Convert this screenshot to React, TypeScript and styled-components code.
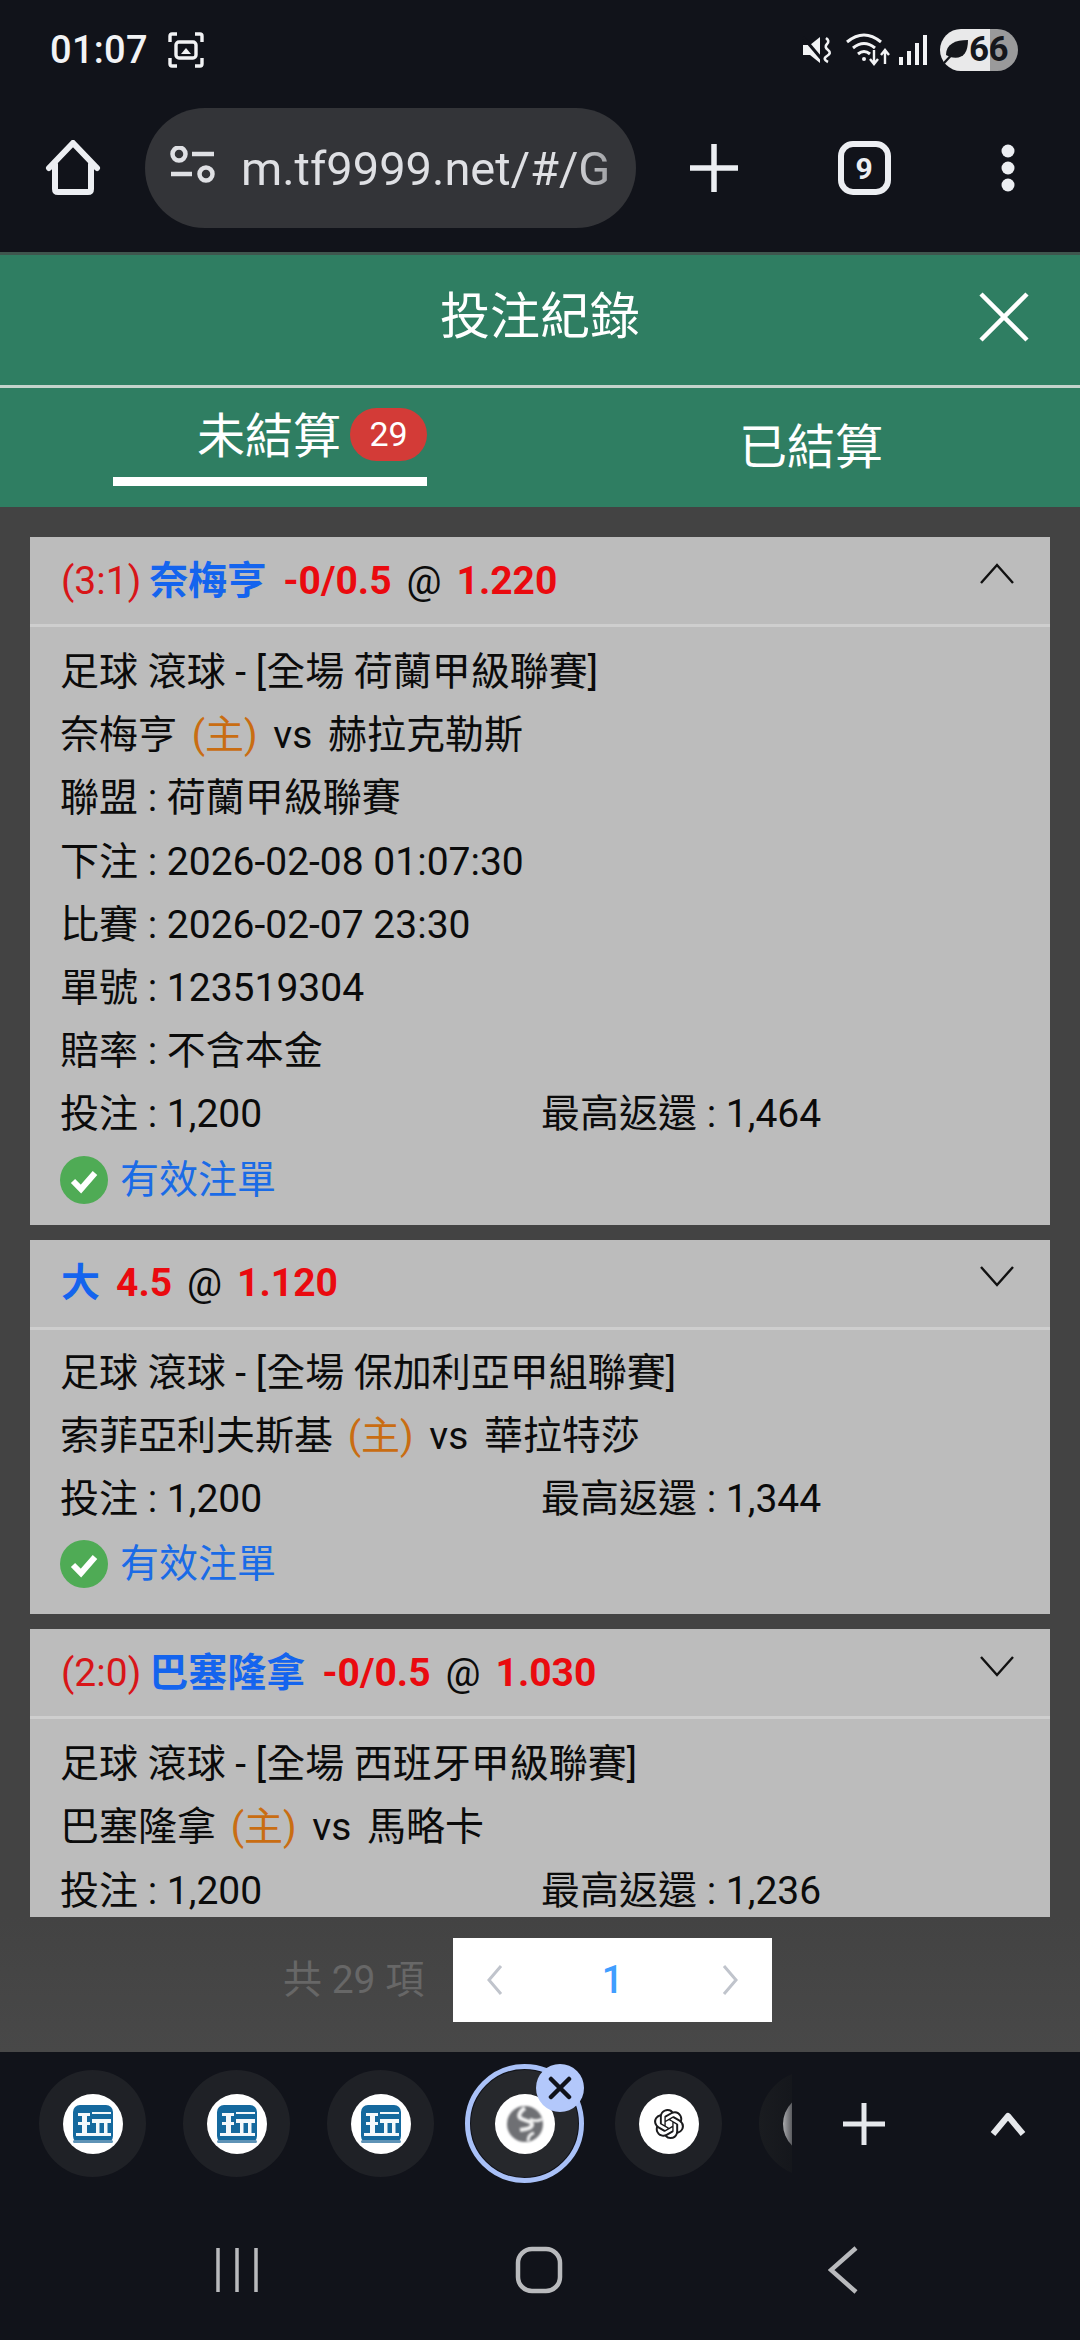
import React from "react";
import styled, { createGlobalStyle } from "styled-components";
import { SiOpenai } from "react-icons/si";

const Global = createGlobalStyle`
  html, body { margin: 0; padding: 0; background: #11131a; }
  * { box-sizing: border-box; }
  body { font-family: Roboto, "Noto Sans CJK TC", sans-serif; }
`;

const Page = styled.div`
  width: 1080px;
  height: 2340px;
  display: flex;
  flex-direction: column;
  background: #11131a;
  overflow: hidden;
`;

const StatusBar = styled.div`
  height: 100px;
  flex: none;
  display: flex;
  align-items: center;
  padding: 0 62px 0 50px;
  color: #f2f3f5;
`;
const Clock = styled.span`
  font-size: 38px;
  font-weight: 500;
  width: 118px;
  letter-spacing: 0.3px;
`;
const StatusRight = styled.div`
  margin-left: auto;
  display: flex;
  align-items: center;
`;
const Battery = styled.div`
  width: 78px;
  height: 42px;
  margin-left: 13px;
  border-radius: 21px;
  background: linear-gradient(90deg, #e9e9ea 0 64%, #9a9a9b 64% 100%);
  display: flex;
  align-items: center;
  padding-left: 3px;
  color: #15171c;
  font-size: 35px;
  font-weight: 700;
  line-height: 42px;
  letter-spacing: -0.5px;
`;
const BrowserBar = styled.div`
  height: 152px;
  flex: none;
  display: flex;
  align-items: flex-start;
  padding-top: 8px;
`;
const IconSlot = styled.div<{ $w: number }>`
  width: ${(p) => p.$w}px;
  height: 120px;
  flex: none;
  display: flex;
  align-items: center;
  justify-content: center;
`;
const Omnibox = styled.div`
  width: 491px;
  height: 120px;
  flex: none;
  border-radius: 60px;
  background: #333438;
  display: flex;
  align-items: center;
  padding-left: 25px;
`;
const Url = styled.span`
  margin-left: 26px;
  width: 372px;
  overflow: hidden;
  white-space: nowrap;
  font-size: 47px;
  color: #dfe0e4;
  -webkit-mask-image: linear-gradient(90deg, #000 88%, rgba(0, 0, 0, 0.6) 100%);
  mask-image: linear-gradient(90deg, #000 88%, rgba(0, 0, 0, 0.6) 100%);
`;
const TabCount = styled.div`
  width: 53px;
  height: 54px;
  border: 6px solid #eceef2;
  border-radius: 15px;
  color: #eceef2;
  font-size: 30px;
  font-weight: 700;
  display: flex;
  align-items: center;
  justify-content: center;
`;
const TitleBar = styled.header`
  height: 133px;
  flex: none;
  border-top: 3px solid #3f564e;
  background: #2f7e62;
  display: flex;
  align-items: center;
  justify-content: center;
  color: #fff;
  font-size: 50px;
  position: relative;
  padding-bottom: 16px;
`;
const CloseBtn = styled.div`
  position: absolute;
  right: 51px;
  top: 37px;
  width: 50px;
  height: 50px;
`;
const TabsRow = styled.div`
  height: 122px;
  flex: none;
  border-top: 3px solid #c4d3cc;
  background: #2f7e62;
  display: flex;
  color: #fff;
  font-size: 48px;
`;
const TabItem = styled.div<{ $active?: boolean }>`
  height: 98px;
  margin-left: ${(p) => (p.$active ? 113 : 313)}px;
  width: ${(p) => (p.$active ? 314 : 142)}px;
  border-bottom: ${(p) => (p.$active ? "9px solid #fff" : "0")};
  display: flex;
  align-items: ${(p) => (p.$active ? "flex-start" : "center")};
  justify-content: ${(p) => (p.$active ? "flex-end" : "center")};
  padding-top: ${(p) => (p.$active ? 20 : 22)}px;
  line-height: 58px;
  white-space: nowrap;
  flex: none;
`;
const Badge = styled.span`
  width: 77px;
  height: 53px;
  margin-left: 9px;
  border-radius: 27px;
  background: #d33b37;
  font-size: 34px;
  line-height: 53px;
  text-align: center;
`;
const ListArea = styled.main`
  height: 1410px;
  flex: none;
  background: #434343;
  padding: 30px 30px 0;
  display: flex;
  flex-direction: column;
  gap: 15px;
  overflow: hidden;
`;
const Card = styled.section`
  flex: none;
  background: #bcbcbc;
  color: #0b0b0b;
`;
const CardHead = styled.div`
  height: 90px;
  border-bottom: 3px solid #cecece;
  display: flex;
  align-items: center;
  padding: 0 35px 0 31px;
  font-size: 39px;
  line-height: 56px;
  white-space: nowrap;
`;
const Score = styled.span`
  color: #d81518;
  margin-right: 8px;
`;
const Team = styled.b<{ $gap?: number }>`
  color: #1464ee;
  font-weight: 700;
  margin-right: ${(p) => p.$gap ?? 17}px;
`;
const Odds = styled.b`
  color: #ea0a0f;
  font-weight: 700;
`;
const At = styled.span`
  margin: 0 15px;
`;
const Chevron = styled.svg`
  margin-left: auto;
  width: 36px;
  height: 22px;
  margin-top: -14px;
  flex: none;
`;
const CardBody = styled.div<{ $top: number; $bottom: number }>`
  padding: ${(p) => p.$top}px 30px ${(p) => p.$bottom}px;
  font-size: 39px;
  line-height: 63.2px;
`;
const Row = styled.div`
  white-space: nowrap;
`;
const TwoCols = styled.div`
  display: grid;
  grid-template-columns: 481px 1fr;
  white-space: nowrap;
`;
const Home = styled.span`
  color: #c96d12;
  margin: 0 6px 0 5px;
`;
const Versus = styled.span<{ $gap: number }>`
  margin-right: ${(p) => p.$gap}px;
`;
const Valid = styled.div`
  display: flex;
  align-items: center;
  gap: 12px;
  margin-top: 2px;
  color: #1a6be6;
  line-height: 62px;
`;
const Pager = styled.div`
  height: 135px;
  flex: none;
  background: linear-gradient(#434343, #484848);
  display: flex;
  align-items: flex-start;
  padding: 21px 0 0 283px;
`;
const PagerTotal = styled.span`
  width: 170px;
  height: 84px;
  line-height: 84px;
  font-size: 39px;
  color: #676767;
  white-space: nowrap;
`;
const PagerBox = styled.div`
  width: 319px;
  height: 84px;
  background: #fff;
  display: flex;
  align-items: center;
  justify-content: space-between;
  padding: 0 34px;
  color: #409eff;
  font-size: 38px;
  font-weight: 500;
`;
const Dock = styled.div`
  height: 148px;
  flex: none;
  display: flex;
  align-items: flex-start;
  padding-top: 8px;
`;
const DockScroll = styled.div`
  width: 792px;
  height: 130px;
  flex: none;
  display: flex;
  align-items: flex-start;
  gap: 37px;
  padding: 10px 0 0 39px;
  overflow: hidden;
`;
const Bubble = styled.div<{ $active?: boolean }>`
  width: 107px;
  height: 107px;
  flex: none;
  border-radius: 50%;
  background: ${(p) => (p.$active ? "#26282c" : "#1f2126")};
  outline: ${(p) => (p.$active ? "5px solid #a9c1f8" : "none")};
  outline-offset: 1px;
  display: flex;
  align-items: center;
  justify-content: center;
  position: relative;
`;
const Favicon = styled.div`
  width: 60px;
  height: 60px;
  border-radius: 50%;
  background: #fff;
  display: flex;
  align-items: center;
  justify-content: center;
  color: #1b1b1d;
`;
const GhostBubble = styled(Bubble)`
  background: linear-gradient(90deg, #1a1c20, #15171c 32px);
`;
const GhostFavicon = styled(Favicon)`
  background: linear-gradient(90deg, #a8a9ac, #5a5b5f 9px);
`;
const CloseChip = styled.div`
  position: absolute;
  top: -6px;
  right: -6px;
  width: 48px;
  height: 48px;
  border-radius: 50%;
  background: #b3c8fb;
  display: flex;
  align-items: center;
  justify-content: center;
`;
const DockBtn = styled.div`
  width: 144px;
  height: 107px;
  margin-top: 10px;
  flex: none;
  display: flex;
  align-items: center;
  justify-content: center;
`;
const NavBar = styled.nav`
  height: 140px;
  flex: none;
  display: flex;
  align-items: flex-start;
  padding-top: 46px;
`;
const NavSlot = styled.div`
  width: 50px;
  height: 48px;
  flex: none;
  display: flex;
  align-items: center;
  justify-content: center;
`;
const NavSlotA = styled(NavSlot)`
  margin-left: 212px;
`;
const NavSlotB = styled(NavSlot)`
  margin-left: 252px;
`;
const NavSlotC = styled(NavSlot)`
  margin-left: 254px;
`;

const Logo = () => (
  <svg width="40" height="38" viewBox="0 0 40 38">
    <rect width="40" height="38" rx="7" fill="#15699e" />
    <rect y="35" width="40" height="3" rx="1.5" fill="#5f93b6" />
    <g fill="#f4f8fb">
      <rect x="19" y="7" width="19" height="2" />
      <rect x="5" y="8" width="12" height="3" />
      <rect x="5" y="17" width="12" height="3" />
      <rect x="19" y="14" width="19" height="4" />
      <rect x="9" y="8" width="5" height="21" />
      <rect x="3" y="28" width="35" height="3" />
      <rect x="23" y="17" width="3.5" height="12" />
      <rect x="31" y="17" width="3.5" height="12" />
    </g>
  </svg>
);

const Globe = () => (
  <svg width="38" height="38" viewBox="0 0 38 38" style={{ filter: "blur(1px)" }}>
    <circle cx="19" cy="19" r="18" fill="#6f7074" />
    <path d="M19 3c-6 4-8 9-3 11l8 3c4 2 2 6-4 7l-6 1" fill="none" stroke="#f2f2f2" strokeWidth="4" />
    <path d="M36 14c-4 3-8 2-12 0M22 36c0-4 2-7 6-8" fill="none" stroke="#f2f2f2" strokeWidth="3" />
  </svg>
);

const Down = () => (
  <Chevron viewBox="0 0 36 22">
    <path d="M2 2 18 20 34 2" fill="none" stroke="#111" strokeWidth="2.4" />
  </Chevron>
);
const Up = () => (
  <Chevron viewBox="0 0 36 22">
    <path d="M2 20 18 2 34 20" fill="none" stroke="#111" strokeWidth="2.4" />
  </Chevron>
);

const Check = () => (
  <svg width="48" height="48" viewBox="0 0 48 48">
    <circle cx="24" cy="24" r="24" fill="#4fab55" />
    <path d="M13 25l8 8 14-16" fill="none" stroke="#fff" strokeWidth="6" />
  </svg>
);

const VALID = "有效注單";

export default function App() {
  return (
    <Page>
      <Global />
      <StatusBar>
        <Clock>01:07</Clock>
        <svg width="36" height="36" viewBox="0 0 36 36" fill="none" stroke="#f2f3f5" strokeWidth="3.4">
          <path d="M9 2H4Q2 2 2 4v6M27 2h5q2 0 2 2v6M9 34H4q-2 0-2-2v-6M27 34h5q2 0 2-2v-6" />
          <rect x="8" y="10" width="20" height="16" rx="3" />
          <path d="M13 22l5-6 5 6z" fill="#f2f3f5" stroke="none" />
        </svg>
        <StatusRight>
          <svg width="30" height="30" viewBox="0 0 30 30" fill="#f2f3f5">
            <path d="M1 10h7l10-8v26L8 20H1z" />
            <path d="M1 2l22 26" stroke="#11131a" strokeWidth="3" />
            <path d="M24 3q4 3 1 6t1 6-1 6 1 6" fill="none" stroke="#f2f3f5" strokeWidth="2.6" />
          </svg>
          <svg width="44" height="34" viewBox="0 0 44 34" fill="none" stroke="#f2f3f5" strokeWidth="3" style={{ marginLeft: 14 }}>
            <path d="M1 9q17-14 34 0M7 15q11-9 22 0M12 21q6-5 12 0" />
            <circle cx="18" cy="26" r="2" fill="#f2f3f5" stroke="none" />
            <path d="M28 17v13M24 26l4 5 4-5M39 31V18M35 22l4-5 4 5" strokeWidth="2.4" />
          </svg>
          <svg width="28" height="30" viewBox="0 0 28 30" fill="#f2f3f5" style={{ marginLeft: 9 }}>
            <rect x="0" y="22" width="4" height="8" />
            <rect x="8" y="16" width="4" height="14" />
            <rect x="16" y="8" width="4" height="22" />
            <rect x="24" y="0" width="4" height="30" />
          </svg>
          <Battery>
            <svg width="26" height="28" viewBox="0 0 26 28" fill="#15171c">
              <path d="M3 19C3 8 12 4 25 4c0 14-6 20-18 17z" />
              <path d="M1 27 16 11" stroke="#15171c" strokeWidth="2.4" />
            </svg>
            <span>66</span>
          </Battery>
        </StatusRight>
      </StatusBar>

      <BrowserBar>
        <IconSlot $w={145}>
          <svg width="56" height="56" viewBox="0 0 56 56" fill="none" stroke="#eceef2" strokeWidth="6" strokeLinecap="round" strokeLinejoin="round">
            <path d="M4 28 28 3 52 28M10 24V49q0 3 3 3H43q3 0 3-3V24" />
          </svg>
        </IconSlot>
        <Omnibox>
          <svg width="45" height="45" viewBox="0 0 45 45" fill="none" stroke="#dfe0e4" strokeWidth="4.5">
            <circle cx="9" cy="8" r="6.5" />
            <path d="M22 8H44M1 28H22" />
            <circle cx="36" cy="28" r="6.5" />
          </svg>
          <Url>m.tf9999.net/#/G</Url>
        </Omnibox>
        <IconSlot $w={156}>
          <svg width="48" height="48" viewBox="0 0 48 48" stroke="#eceef2" strokeWidth="5.5">
            <path d="M24 0V48M0 24H48" />
          </svg>
        </IconSlot>
        <IconSlot $w={144}>
          <TabCount>9</TabCount>
        </IconSlot>
        <IconSlot $w={144}>
          <svg width="14" height="48" viewBox="0 0 14 48" fill="#eceef2">
            <circle cx="7" cy="7" r="6.5" />
            <circle cx="7" cy="24" r="6.5" />
            <circle cx="7" cy="41" r="6.5" />
          </svg>
        </IconSlot>
      </BrowserBar>

      <TitleBar>
        投注紀錄
        <CloseBtn>
          <svg width="50" height="50" viewBox="0 0 50 50" stroke="#fff" strokeWidth="4.5">
            <path d="M2 2 48 48M48 2 2 48" />
          </svg>
        </CloseBtn>
      </TitleBar>
      <TabsRow>
        <TabItem $active>
          未結算
          <Badge>29</Badge>
        </TabItem>
        <TabItem>已結算</TabItem>
      </TabsRow>

      <ListArea>
        <Card>
          <CardHead>
            <Score>(3:1)</Score>
            <Team>奈梅亨</Team>
            <Odds>-0/0.5</Odds>
            <At>@</At>
            <Odds>1.220</Odds>
            <Up />
          </CardHead>
          <CardBody $top={14} $bottom={14}>
            <Row>足球 滾球 - [全場 荷蘭甲級聯賽]</Row>
            <Row>奈梅亨 <Home>(主)</Home> <Versus $gap={6}>vs</Versus> 赫拉克勒斯</Row>
            <Row>聯盟 : 荷蘭甲級聯賽</Row>
            <Row>下注 : 2026-02-08 01:07:30</Row>
            <Row>比賽 : 2026-02-07 23:30</Row>
            <Row>單號 : 123519304</Row>
            <Row>賠率 : 不含本金</Row>
            <TwoCols>
              <span>投注 : 1,200</span>
              <span>最高返還 : 1,464</span>
            </TwoCols>
            <Valid>
              <Check />
              {VALID}
            </Valid>
          </CardBody>
        </Card>
        <Card>
          <CardHead>
            <Team $gap={16}>大</Team>
            <Odds>4.5</Odds>
            <At>@</At>
            <Odds>1.120</Odds>
            <Down />
          </CardHead>
          <CardBody $top={12} $bottom={19}>
            <Row>足球 滾球 - [全場 保加利亞甲組聯賽]</Row>
            <Row>索菲亞利夫斯基 <Home>(主)</Home> <Versus $gap={6}>vs</Versus> 華拉特莎</Row>
            <TwoCols>
              <span>投注 : 1,200</span>
              <span>最高返還 : 1,344</span>
            </TwoCols>
            <Valid>
              <Check />
              {VALID}
            </Valid>
          </CardBody>
        </Card>
        <Card>
          <CardHead>
            <Score>(2:0)</Score>
            <Team>巴塞隆拿</Team>
            <Odds>-0/0.5</Odds>
            <At>@</At>
            <Odds>1.030</Odds>
            <Down />
          </CardHead>
          <CardBody $top={14} $bottom={14}>
            <Row>足球 滾球 - [全場 西班牙甲級聯賽]</Row>
            <Row>巴塞隆拿 <Home>(主)</Home> <Versus $gap={6}>vs</Versus> 馬略卡</Row>
            <TwoCols>
              <span>投注 : 1,200</span>
              <span>最高返還 : 1,236</span>
            </TwoCols>
          </CardBody>
        </Card>
      </ListArea>

      <Pager>
        <PagerTotal>共 29 項</PagerTotal>
        <PagerBox>
          <svg width="16" height="30" viewBox="0 0 16 30" fill="none" stroke="#c0c4cc" strokeWidth="3">
            <path d="M14 1 2 15 14 29" />
          </svg>
          <span>1</span>
          <svg width="16" height="30" viewBox="0 0 16 30" fill="none" stroke="#c0c4cc" strokeWidth="3">
            <path d="M2 1 14 15 2 29" />
          </svg>
        </PagerBox>
      </Pager>

      <Dock>
        <DockScroll>
          <Bubble>
            <Favicon>
              <Logo />
            </Favicon>
          </Bubble>
          <Bubble>
            <Favicon>
              <Logo />
            </Favicon>
          </Bubble>
          <Bubble>
            <Favicon>
              <Logo />
            </Favicon>
          </Bubble>
          <Bubble $active>
            <Favicon>
              <Globe />
            </Favicon>
            <CloseChip>
              <svg width="24" height="24" viewBox="0 0 24 24" stroke="#10121a" strokeWidth="4.5" strokeLinecap="round">
                <path d="M3 3 21 21M21 3 3 21" />
              </svg>
            </CloseChip>
          </Bubble>
          <Bubble>
            <Favicon>
              <SiOpenai size={30} />
            </Favicon>
          </Bubble>
          <GhostBubble>
            <GhostFavicon />
          </GhostBubble>
        </DockScroll>
        <DockBtn>
          <svg width="42" height="42" viewBox="0 0 42 42" stroke="#e6e8ec" strokeWidth="5">
            <path d="M21 0V42M0 21H42" />
          </svg>
        </DockBtn>
        <DockBtn>
          <svg width="36" height="24" viewBox="0 0 36 24" fill="none" stroke="#e6e8ec" strokeWidth="6" strokeLinejoin="round">
            <path d="M3 22 18 4 33 22" />
          </svg>
        </DockBtn>
      </Dock>

      <NavBar>
        <NavSlotA>
          <svg width="44" height="46" viewBox="0 0 44 46" stroke="#b9babd" strokeWidth="3.5">
            <path d="M3 1V45M22 1V45M41 1V45" />
          </svg>
        </NavSlotA>
        <NavSlotB>
          <svg width="48" height="48" viewBox="0 0 48 48" fill="none" stroke="#b9babd" strokeWidth="4.5">
            <rect x="3" y="3" width="42" height="42" rx="14" />
          </svg>
        </NavSlotB>
        <NavSlotC>
          <svg width="30" height="48" viewBox="0 0 30 48" fill="none" stroke="#b9babd" strokeWidth="4.5">
            <path d="M28 2 3 24 28 46" />
          </svg>
        </NavSlotC>
      </NavBar>
    </Page>
  );
}
